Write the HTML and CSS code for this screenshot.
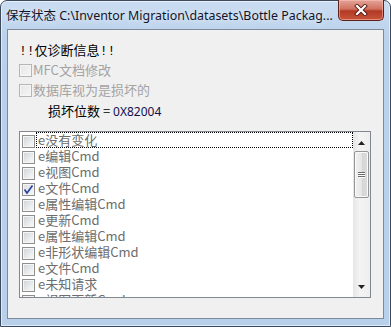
FILE: index.html
```html
<!DOCTYPE html>
<html lang="zh">
<head>
<meta charset="utf-8">
<title>保存状态</title>
<link rel="stylesheet" href="styles.css">
</head>
<body>
<div class="window">
  <div class="titlebar">
    <span class="title"><span class="cjk">保存状态</span> C:\Inventor Migration\datasets\Bottle Packag...</span>
    <div class="close">
      <svg width="14" height="12" viewBox="0 0 14 12">
        <path d="M3 2 L11 10 M11 2 L3 10" stroke="#5a1c16" stroke-width="4" stroke-linecap="square" fill="none"/>
        <path d="M3 2 L11 10 M11 2 L3 10" stroke="#ffffff" stroke-width="2.2" stroke-linecap="square" fill="none"/>
      </svg>
    </div>
  </div>
  <div class="client">
    <div class="diag"><span class="bang">!!</span>仅诊断信息<span class="bang">!!</span></div>
    <div class="chk disabled"><span class="box"></span><span>MFC文档修改</span></div>
    <div class="chk disabled"><span class="box"></span><span>数据库视为是损坏的</span></div>
    <div class="bits">损坏位数 = <span class="val">0X82004</span></div>
    <div class="listbox">
      <div class="items">
        <div class="item"><span class="box"></span><span class="label focus">e没有变化</span></div>
        <div class="item"><span class="box"></span><span class="label">e编辑Cmd</span></div>
        <div class="item"><span class="box"></span><span class="label">e视图Cmd</span></div>
        <div class="item"><span class="box checked"><svg width="11" height="11" viewBox="0 0 11 11"><path d="M1.5 5.5 L4 9 L9.5 1.5" stroke="#2a44a0" stroke-width="1.7" fill="none"/></svg></span><span class="label">e文件Cmd</span></div>
        <div class="item"><span class="box"></span><span class="label">e属性编辑Cmd</span></div>
        <div class="item"><span class="box"></span><span class="label">e更新Cmd</span></div>
        <div class="item"><span class="box"></span><span class="label">e属性编辑Cmd</span></div>
        <div class="item"><span class="box"></span><span class="label">e非形状编辑Cmd</span></div>
        <div class="item"><span class="box"></span><span class="label">e文件Cmd</span></div>
        <div class="item"><span class="box"></span><span class="label">e未知请求</span></div>
        <div class="item"><span class="box"></span><span class="label">e视图更新Cmd</span></div>
      </div>
      <div class="scrollbar">
        <div class="arrow up"><svg width="7" height="4" viewBox="0 0 7 4"><path d="M0 4 L3.5 0 L7 4 Z" fill="#222"/></svg></div>
        <div class="thumb"><span class="grip"></span><span class="grip"></span><span class="grip"></span></div>
        <div class="track"></div>
        <div class="arrow down"><svg width="7" height="4" viewBox="0 0 7 4"><path d="M0 0 L7 0 L3.5 4 Z" fill="#222"/></svg></div>
      </div>
    </div>
  </div>
</div>
</body>
</html>
```

FILE: styles.css
```css
* { box-sizing: border-box; }
html, body { margin: 0; padding: 0; }
body {
  width: 391px;
  height: 327px;
  overflow: hidden;
  background: #ffffff;
  font-family: "Noto Sans CJK SC", "Noto Sans", sans-serif;
}
.window {
  width: 391px;
  height: 327px;
  border: 1px solid #3b4a5c;
  border-radius: 7px 7px 0 0;
  background: linear-gradient(to bottom, #cadcf1 0, #bad1eb 40px, #b9d0ea 100%);
  box-shadow: inset 0 0 0 1px rgba(255,255,255,0.55);
  display: flex;
  flex-direction: column;
}
.titlebar {
  height: 28px;
  display: flex;
  align-items: flex-start;
  padding-left: 5px;
}
.title {
  margin-top: 6px;
  line-height: 16px;
  font-family: "Noto Sans", "Noto Sans CJK SC", sans-serif;
  font-size: 12.4px;
  color: #141428;
  white-space: nowrap;
  text-shadow: 0 0 6px rgba(255,255,255,0.9);
}
.title .cjk {
  font-family: "Noto Sans CJK SC", sans-serif;
  font-size: 12.5px;
}
.close {
  margin-left: auto;
  margin-right: 6px;
  margin-top: -1px;
  width: 46px;
  height: 21px;
  border: 1px solid #5e2019;
  border-top: none;
  border-radius: 0 0 5px 5px;
  background: linear-gradient(to bottom, #e3a49a 0, #d0725f 45%, #b23a25 55%, #c9533a 100%);
  box-shadow: inset 0 0 0 1px rgba(255,200,190,0.5);
  display: flex;
  align-items: center;
  justify-content: center;
}
.client {
  flex: 1;
  margin: 0 6px 7px 6px;
  border: 1px solid #7c8a9a;
  background: #f0f0f0;
  padding: 10px 12px 0 11px;
  display: flex;
  flex-direction: column;
  font-size: 13px;
}
.diag {
  height: 20px;
  line-height: 20px;
  color: #000;
}
.bang {
  font-family: "Liberation Mono", monospace;
  font-size: 13px;
}
.chk {
  height: 20px;
  display: flex;
  align-items: center;
  gap: 1px;
  line-height: 20px;
}
.chk.disabled { color: #a3a3a3; }
.box {
  width: 13px;
  height: 13px;
  flex: none;
  border: 1px solid #8e8f8f;
  background: linear-gradient(135deg, #cfd2d6 0, #eef0f2 70%, #f6f6f6 100%);
  box-shadow: inset 0 0 0 1px #f6f6f6;
  display: flex;
  align-items: center;
  justify-content: center;
}
.chk.disabled .box {
  border-color: #b5b5b5;
  background: linear-gradient(135deg, #e6e6e6 0, #f6f6f6 100%);
}
.box.checked {
  background: linear-gradient(135deg, #dde0e4 0, #f4f5f6 100%);
}
.bits {
  margin-top: 1px;
  height: 20px;
  line-height: 20px;
  padding-left: 29px;
  color: #000;
}
.bits .val {
  font-family: "Noto Sans", sans-serif;
  font-size: 12px;
  color: #101050;
}
.listbox {
  margin-top: 10px;
  height: 167px;
  border: 1px solid #828790;
  background: #ffffff;
  display: flex;
}
.items {
  flex: 1;
  overflow: hidden;
  display: flex;
  flex-direction: column;
  padding-left: 2px;
  color: #6d6d6d;
}
.item {
  height: 16px;
  flex: none;
  display: flex;
  align-items: flex-start;
}
.item .box { margin-top: 3px; }
.label {
  flex: 1;
  margin-left: 1px;
  height: 16px;
  line-height: 14px;
  padding-left: 1px;
  border: 1px dotted transparent;
  white-space: nowrap;
}
.label.focus { border-color: #000; }
.scrollbar {
  width: 17px;
  flex: none;
  display: flex;
  flex-direction: column;
  background: linear-gradient(to right, #e6e6e6, #f3f3f3 40%, #eeeeee);
}
.arrow {
  height: 18px;
  flex: none;
  display: flex;
  align-items: center;
  justify-content: center;
}
.arrow.up { padding-top: 3px; }
.arrow.down { height: 18px; padding-bottom: 2px; }
.thumb {
  height: 47px;
  flex: none;
  margin: 1px 1px 0 1px;
  border: 1px solid #969696;
  border-radius: 2px;
  background: linear-gradient(to right, #f2f2f2 0, #e6e6e6 50%, #d6d6d6 55%, #dcdcdc 100%);
  box-shadow: inset 0 0 0 1px #fafafa;
  display: flex;
  flex-direction: column;
  align-items: center;
  justify-content: center;
  gap: 1px;
}
.grip {
  width: 7px;
  height: 1px;
  background: #6b6b6b;
  box-shadow: 0 1px 0 #ffffff;
}
.track { flex: 1; }
```
